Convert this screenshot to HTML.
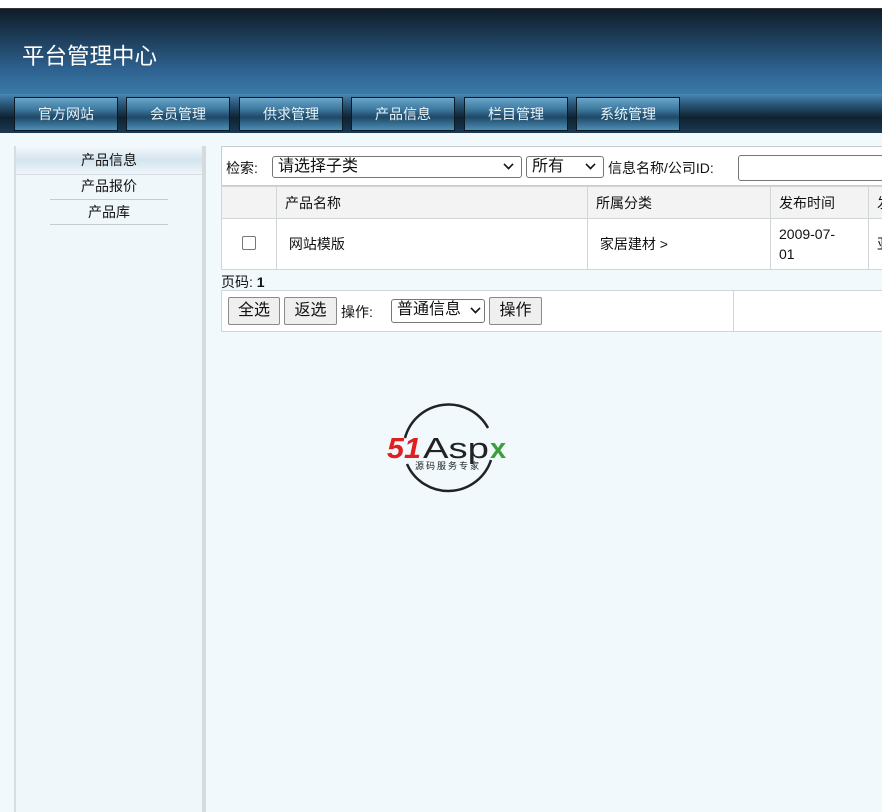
<!DOCTYPE html>
<html><head><meta charset="utf-8"><style>
body{margin:0;width:882px;height:812px;overflow:hidden;background:#f2f9fc;font-family:"Liberation Sans","Noto Sans CJK SC",sans-serif;font-size:14px;color:#111;position:relative}
.a{position:absolute}
.hdr{left:0;top:8px;width:882px;height:87px;background:linear-gradient(#0e1c28 0%,#1c3a55 30%,#2e6290 70%,#3b7cab 100%);border-top:1px solid #333}
.nav{left:0;top:94px;width:882px;height:39px;background:linear-gradient(#4a88b4 0%,#2b5a7c 25%,#0f2232 60%,#1b3a52 100%)}
.btn{top:97px;width:102px;height:32px;border:1px solid #0d1a26;background:linear-gradient(#6aa6c8 0%,#3e7aa0 35%,#1e4866 60%,#4d8fb8 100%);color:#e8f2f8;text-align:center;line-height:32px;font-size:14px}
.side{left:14px;top:146px;width:186px;height:666px;background:#f0f7fb;border-left:2px solid #d8dde0;border-right:4px solid #d5dadd}
table{border-collapse:collapse}
td{border:1px solid #d0d5d8;padding:0 8px;font-size:14px}
.sel{border:1px solid #767676;border-radius:3px;background:#fff;height:22px;font-size:16px;line-height:20px;padding-left:5px;box-sizing:border-box}
.ar{position:absolute;right:5px;top:5px;width:7px;height:7px;border-right:2px solid #111;border-bottom:2px solid #111;transform:rotate(45deg) scale(.8);top:3px}
.b{border:1px solid #8a8a8a;border-radius:2px;background:#efefef;height:28px;line-height:26px;font-size:16px;text-align:center;box-sizing:border-box}
</style></head><body>
<div class="a" style="left:0;top:0;width:882px;height:8px;background:#fff"></div>
<div class="a hdr"></div>
<div class="a" style="left:22px;top:39px;color:#fff;font-size:22.5px">平台管理中心</div>
<div class="a nav"></div>
<div class="a btn" style="left:14px">官方网站</div>
<div class="a btn" style="left:126px">会员管理</div>
<div class="a btn" style="left:239px">供求管理</div>
<div class="a btn" style="left:351px">产品信息</div>
<div class="a btn" style="left:464px">栏目管理</div>
<div class="a btn" style="left:576px">系统管理</div>
<div class="a side">
 <div style="height:28px;line-height:28px;text-align:center;background:linear-gradient(#f4f9fc,#d4e4ef 50%,#eef5f9);border-bottom:1px solid #d5dde3">产品信息</div>
 <div style="margin:0 34px;height:24px;line-height:22px;text-align:center;border-bottom:1px solid #c8ccd0">产品报价</div>
 <div style="margin:0 34px;height:24px;line-height:24px;text-align:center;border-bottom:1px solid #c8ccd0">产品库</div>
</div>
<div class="a" style="left:221px;top:146px;width:670px;height:40px;background:#fff;border:1px solid #c8cdd0;box-sizing:border-box"></div>
<div class="a" style="left:226px;top:158px">检索:</div>
<div class="a sel" style="left:272px;top:156px;width:250px">请选择子类<span class="ar" style="right:8px"></span></div>
<div class="a sel" style="left:526px;top:156px;width:78px">所有<span class="ar" style="right:8px"></span></div>
<div class="a" style="left:608px;top:158px">信息名称/公司ID:</div>
<div class="a sel" style="left:738px;top:155px;width:160px;height:26px"></div>
<table class="a" style="left:221px;top:186px;width:680px">
<tr style="height:32px;background:#f3f3f3"><td style="width:38px"></td><td style="width:294px">产品名称</td><td style="width:166px">所属分类</td><td style="width:81px">发布时间</td><td>发</td></tr>
<tr style="height:51px;background:#fff"><td style="text-align:center"><span style="display:inline-block;width:12px;height:12px;border:1px solid #777;border-radius:2px"></span></td><td>&nbsp;网站模版</td><td>&nbsp;家居建材 &gt;</td><td style="line-height:20px"> 2009-07-<br>01</td><td>亚</td></tr>
</table>
<div class="a" style="left:221px;top:272px">页码: <b>1</b></div>
<div class="a" style="left:221px;top:290px;width:670px;height:42px;background:#fff;border:1px solid #d0d5d8;box-sizing:border-box"></div>
<div class="a" style="left:733px;top:290px;width:1px;height:42px;background:#d0d5d8"></div>
<div class="a b" style="left:228px;top:297px;width:52px">全选</div>
<div class="a b" style="left:284px;top:297px;width:53px">返选</div>
<div class="a" style="left:341px;top:302px">操作:</div>
<div class="a sel" style="left:391px;top:299px;width:94px;height:24px">普通信息<span class="ar" style="right:4px;top:4px"></span></div>
<div class="a b" style="left:489px;top:297px;width:53px">操作</div>
<svg class="a" style="left:385px;top:400px" width="130" height="96">
<path d="M20 38 A45 45 0 0 1 103 28" fill="none" stroke="#222" stroke-width="2.5"/>
<path d="M106 60 A45 45 0 0 1 22 64" fill="none" stroke="#222" stroke-width="2.5"/>
<text x="2" y="58" font-size="29" font-weight="bold" font-style="italic" fill="#e02020" font-family="Liberation Sans" textLength="34" lengthAdjust="spacingAndGlyphs">51</text>
<text x="38" y="58" font-size="29" fill="#222" font-family="Liberation Sans" textLength="66" lengthAdjust="spacingAndGlyphs">Asp</text>
<text x="105" y="58" font-size="29" font-weight="bold" fill="#3aa03a" font-family="Liberation Sans">x</text>
<text x="30" y="69" font-size="9" fill="#222" font-family="Noto Sans CJK SC" textLength="64">源码服务专家</text>
</svg>
</body></html>
